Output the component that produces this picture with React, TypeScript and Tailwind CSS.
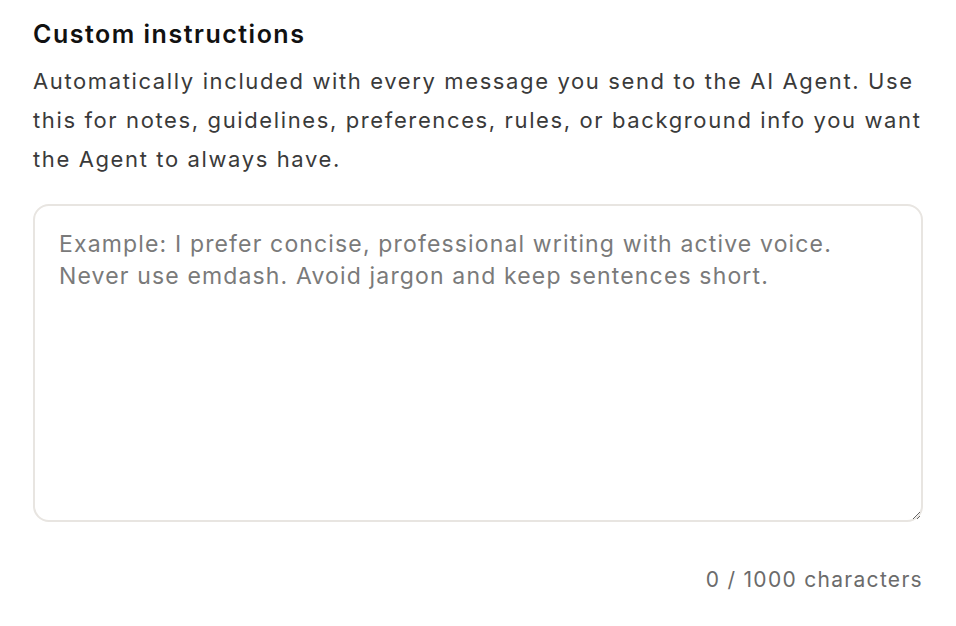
export default function App() {
  return (
    <div
      className="min-h-screen bg-white px-[33px] pt-[18px]"
      style={{ fontFamily: "Inter, 'Noto Sans', sans-serif" }}
    >
      <h2 className="text-[25px] font-semibold leading-[32px] tracking-[1.5px] text-[#111111]">
        Custom instructions
      </h2>
      <p className="mt-[12px] text-[22px] leading-[39px] tracking-[1.62px] text-[#3a3a3a]">
        Automatically included with every message you send to the AI Agent. Use this for notes,
        guidelines, preferences, rules, or background info you want the Agent to always have.
      </p>
      <textarea
        placeholder="Example: I prefer concise, professional writing with active voice. Never use emdash. Avoid jargon and keep sentences short."
        className="mt-[25px] block h-[318px] w-full rounded-[16px] border-2 border-[#e8e5e1] px-[24px] py-[22px] text-[23px] leading-[32px] tracking-[1.15px] text-[#222] placeholder:text-[#7a7a7a] outline-none"
      />
      <div className="mt-[44px] text-right text-[21px] leading-[28px] tracking-[1.3px] text-[#6b6b6b]">
        0 / 1000 characters
      </div>
    </div>
  );
}
